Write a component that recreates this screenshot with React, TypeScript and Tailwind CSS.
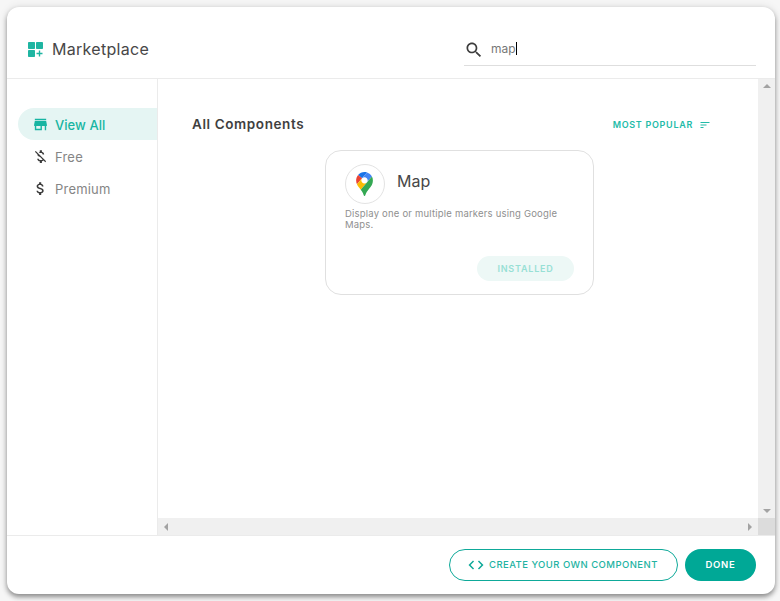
const FONT = "font-['Inter','Open_Sans',sans-serif]";

function Mi({ d, className }: { d: string; className?: string }) {
  return (
    <svg viewBox="0 0 24 24" className={className} fill="currentColor">
      <path d={d} />
    </svg>
  );
}

const STORE = "M20 4H4v2h16V4zm1 10v-2l-1-5H4l-1 5v2h1v6h10v-6h4v6h2v-6h1zm-9 4H6v-4h6v4z";
const MONEY_OFF = "M12.5 6.9c1.78 0 2.44.85 2.5 2.1h2.21c-.07-1.72-1.12-3.3-3.21-3.81V3h-3v2.16c-.53.12-1.03.3-1.48.54l1.47 1.47c.41-.17.91-.27 1.51-.27zM5.33 4.06L4.06 5.33 7.5 8.77c0 2.08 1.56 3.21 3.91 3.91l3.51 3.51c-.34.48-1.05.91-2.42.91-2.06 0-2.87-.92-2.98-2.1h-2.2c.12 2.19 1.76 3.42 3.68 3.83V21h3v-2.15c.96-.18 1.82-.55 2.45-1.12l2.22 2.22 1.27-1.27L5.33 4.06z";
const MONEY = "M11.8 10.9c-2.27-.59-3-1.2-3-2.15 0-1.09 1.01-1.85 2.7-1.85 1.78 0 2.44.85 2.5 2.1h2.21c-.07-1.72-1.12-3.3-3.21-3.81V3h-3v2.16c-1.94.42-3.5 1.68-3.5 3.61 0 2.31 1.91 3.46 4.7 4.13 2.5.6 3 1.48 3 2.41 0 .69-.49 1.79-2.7 1.79-2.06 0-2.87-.92-2.98-2.1h-2.2c.12 2.19 1.76 3.42 3.68 3.83V21h3v-2.15c1.95-.37 3.5-1.5 3.5-3.55 0-2.84-2.43-3.81-4.7-4.4z";
const SEARCH = "M15.5 14h-.79l-.28-.27C15.41 12.59 16 11.11 16 9.5 16 5.91 13.09 3 9.5 3S3 5.91 3 9.5 5.91 16 9.5 16c1.61 0 3.09-.59 4.23-1.57l.27.28v.79l5 4.99L20.49 19l-4.99-5zm-6 0C7.01 14 5 11.99 5 9.5S7.01 5 9.5 5 14 7.01 14 9.5 11.99 14 9.5 14z";
const SORT = "M3 18h6v-2H3v2zM3 6v2h18V6H3zm0 7h12v-2H3v2z";
const CODE = "M9.4 16.6L4.8 12l4.6-4.6L8 6l-6 6 6 6 1.4-1.4zm5.2 0l4.6-4.6-4.6-4.6L16 6l6 6-6 6-1.4-1.4z";

function Logo() {
  return (
    <svg viewBox="0 0 15 15" className="w-[15px] h-[15px] text-[#1fb5a2]" fill="currentColor">
      <rect x="0" y="0" width="7" height="7" rx="0.8" />
      <rect x="8" y="0" width="7" height="7" rx="0.8" />
      <rect x="0" y="8" width="7" height="7" rx="0.8" />
      <path d="M10.8 8.500h1.400v2.300h2.300v1.400h-2.300v2.300h-1.400v-2.300H8.500v-1.400h2.300z" />
    </svg>
  );
}

function MapPin() {
  return (
    <svg viewBox="0 0 92.300 132.300" className="w-[17px] h-[24px]">
      <path fill="#1a73e8" d="M60.200 2.200C55.800.8 51 0 46.100 0 32 0 19.300 6.400 10.800 16.500l21.800 18.300L60.200 2.200z" />
      <path fill="#ea4335" d="M10.800 16.500C4.100 24.500 0 34.900 0 46.100c0 8.700 1.700 15.700 4.600 22l28-33.300-21.800-18.300z" />
      <path fill="#4285f4" d="M46.200 28.500c9.800 0 17.700 7.900 17.700 17.700 0 4.300-1.600 8.300-4.200 11.400 0 0 13.900-16.600 27.500-32.700-5.600-10.800-15.300-19-27-22.700L32.600 34.800c3.300-3.800 8.100-6.300 13.600-6.300" />
      <path fill="#fbbc04" d="M46.200 63.800c-9.800 0-17.700-7.900-17.700-17.700 0-4.300 1.500-8.300 4.100-11.300l-28 33.300c4.800 10.600 12.800 19.200 21 29.900l34.100-40.500c-3.300 3.900-8.100 6.300-13.500 6.300" />
      <path fill="#34a853" d="M59.100 109.200c15.400-24.100 33.300-35 33.300-63 0-7.700-1.900-14.900-5.200-21.300L25.600 98c2.600 3.400 5.300 7.300 7.900 11.300 9.400 14.500 6.800 23.100 12.800 23.100s3.400-8.700 12.800-23.200" />
    </svg>
  );
}

function NavItem({ d, label, active }: { d: string; label: string; active?: boolean }) {
  return (
    <div className={`h-8 flex items-center pl-[14px] rounded-l-[16px] ${active ? "bg-[#e5f5f3] text-[#17b5a2] font-medium" : "text-[#858585]"}`}>
      <Mi d={d} className={`w-[17px] h-[17px] ${active ? "text-[#17b5a2]" : "text-[#3c3c3c]"}`} />
      <span className={`ml-[6px] text-[13px] pt-[3px] ${active ? "tracking-[0.05px]" : "tracking-[0.2px]"}`}>{label}</span>
    </div>
  );
}

export default function App() {
  return (
    <div className={`${FONT} w-[780px] h-[601px] bg-[#f6f6f6] p-[7px] overflow-hidden`}>
      <div className="w-[768px] h-[587px] bg-white rounded-[12px] shadow-[0_3px_5px_rgba(0,0,0,0.4),0_0_8px_rgba(0,0,0,0.1)] flex flex-col overflow-hidden">
        <header className="h-[72px] shrink-0 flex items-start border-b border-[#ebebeb]">
          <div className="flex items-center pl-[21px] pt-[34px]">
            <Logo />
            <span className="ml-[9px] text-[16px] leading-[16px] tracking-[0.3px] text-[#474747]">Marketplace</span>
          </div>
          <div className="ml-auto mr-[19px] mt-[27px] w-[292px] h-[32px] border-b border-[#dedede] flex items-center">
            <Mi d={SEARCH} className="w-[20px] h-[20px] text-[#3d3d3d]" />
            <span className="ml-[7px] text-[12px] text-[#777777] leading-[14px] mb-[2px]">map</span>
            <span className="w-px h-[13px] bg-black mb-[2px]" />
          </div>
        </header>
        <div className="flex-1 min-h-0 flex">
          <nav className="w-[151px] shrink-0 border-r border-[#ebebeb] pt-[29px] pl-[11px]">
            <NavItem d={STORE} label="View All" active />
            <NavItem d={MONEY_OFF} label="Free" />
            <NavItem d={MONEY} label="Premium" />
          </nav>
          <div className="flex-1 min-w-0 flex flex-col">
            <div className="flex-1 min-h-0 flex">
              <main className="flex-1 min-w-0 pt-[36px]">
                <div className="flex items-center pl-[34px] pr-[47px] h-[18px]">
                  <h2 className="text-[13.5px] font-semibold tracking-[0.6px] text-[#3f3f3f]">All Components</h2>
                  <div className="ml-auto flex items-center text-[#22bba8] pt-[2px]">
                    <span className="text-[9px] font-semibold tracking-[0.7px]">MOST POPULAR</span>
                    <Mi d={SORT} className="ml-[6px] w-[12px] h-[12px]" />
                  </div>
                </div>
                <div className="ml-[167px] mt-[17px] w-[269px] h-[145px] border border-[#e0e0e0] rounded-[16px] pl-[19px] pr-[19px] pt-[13px] flex flex-col">
                  <div className="flex items-center">
                    <div className="w-[40px] h-[40px] rounded-full border border-[#e3e3e3] flex items-center justify-center pr-[2px]">
                      <MapPin />
                    </div>
                    <span className="ml-[12px] text-[16px] text-[#474747] -mt-[7px]">Map</span>
                  </div>
                  <p className="mt-[4px] text-[9.5px] leading-[11px] text-[#8f8f8f] tracking-[0.2px]">Display one or multiple markers using Google Maps.</p>
                  <div className="mt-auto mb-[13px] ml-auto w-[97px] h-[25px] rounded-full bg-[#edf8f6] flex items-center justify-center">
                    <span className="text-[9px] font-semibold tracking-[0.8px] text-[#97e0d5]">INSTALLED</span>
                  </div>
                </div>
              </main>
              <div className="w-[17px] shrink-0 bg-[#f0f0f0] flex flex-col items-center justify-between py-[5px]">
                <span className="w-0 h-0 border-l-[4px] border-r-[4px] border-b-[4px] border-l-transparent border-r-transparent border-b-[#a3a3a3]" />
                <span className="w-0 h-0 border-l-[4px] border-r-[4px] border-t-[4px] border-l-transparent border-r-transparent border-t-[#a3a3a3]" />
              </div>
            </div>
            <div className="h-[17px] shrink-0 flex">
              <div className="flex-1 bg-[#f0f0f0] flex items-center justify-between px-[6px]">
                <span className="w-0 h-0 border-t-[4px] border-b-[4px] border-r-[4px] border-t-transparent border-b-transparent border-r-[#a3a3a3]" />
                <span className="w-0 h-0 border-t-[4px] border-b-[4px] border-l-[4px] border-t-transparent border-b-transparent border-l-[#a3a3a3]" />
              </div>
              <div className="w-[17px] bg-[#dcdcdc]" />
            </div>
          </div>
        </div>
        <footer className="h-[59px] shrink-0 border-t border-[#ebebeb] flex items-start justify-end pt-[13px] pr-[19px] gap-[7px]">
          <div className="w-[229px] h-[32px] rounded-full border border-[#0ea999] flex items-center pl-[17px] text-[#22b3a2]">
            <Mi d={CODE} className="w-[18px] h-[18px] text-[#0ea999]" />
            <span className="ml-[4px] text-[9.5px] font-medium tracking-[0.45px]">CREATE YOUR OWN COMPONENT</span>
          </div>
          <div className="w-[71px] h-[32px] rounded-full bg-[#00a896] flex items-center justify-center text-white">
            <span className="text-[9.5px] font-semibold tracking-[0.7px]">DONE</span>
          </div>
        </footer>
      </div>
    </div>
  );
}
